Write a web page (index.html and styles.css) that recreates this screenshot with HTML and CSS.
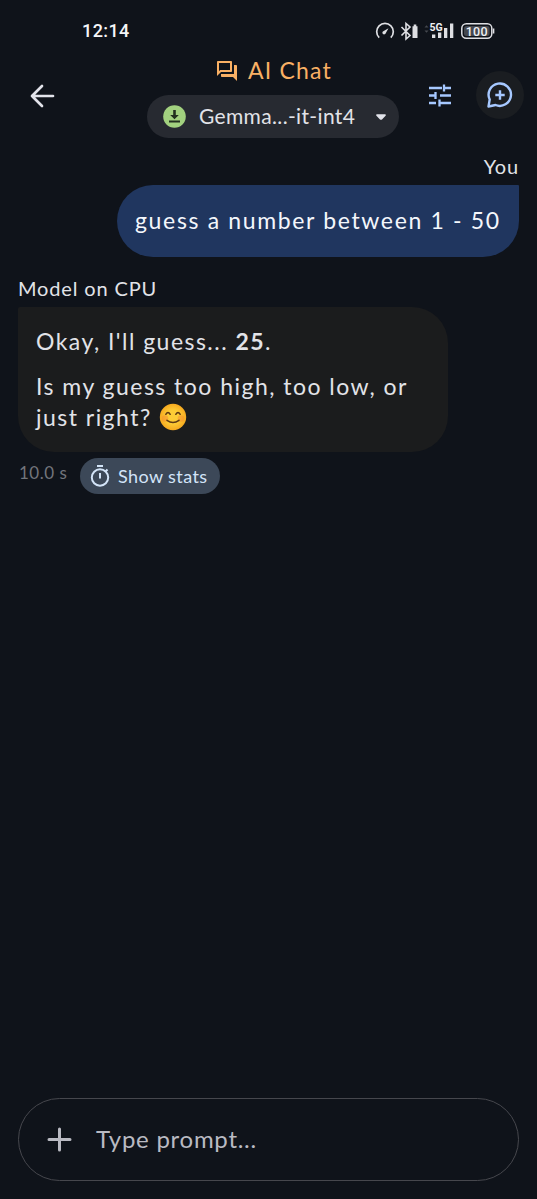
FILE: index.html
```html
<!DOCTYPE html>
<html lang="en">
<head>
<meta charset="utf-8">
<title>AI Chat</title>
<link rel="stylesheet" href="styles.css">
</head>
<body>
<div class="screen">
  <div class="status">
    <span class="clock">12:14</span>
    <svg class="status-icons" width="124" height="24" viewBox="0 0 124 24" fill="none" stroke="#dedfe3">
      <path d="M5.2 18.6A8.3 8.3 0 1 1 16.8 18.600" stroke-width="1.7"/>
      <path d="M14.500 9.200L11.700 14.200A1.700 1.700 0 1 1 9.300 12.200Z" fill="#dedfe3" stroke="none"/>
      <path d="M27.500 8L36 16.500 32 20V4.500L36 8 27.500 16.500" stroke-width="1.600"/>
      <path d="M38.500 7.300h1.200V5.500h2.600v1.800h1.200V19h-5z" fill="#dedfe3" stroke="none"/>
      <path d="M50.500 8.500l2-2.300 2 2.300zM50.500 11.500l2 2.300 2-2.300z" fill="#45484f" stroke="none"/>
      <path d="M58 15.500h3.300V19H58zM64 13.500h3.300V19H64zM70 9h3.300v10H70zM76 4.500h3.300V19H76z" fill="#dedfe3" stroke="none"/>
      <text class="net" x="55.500" y="11.500">5G</text>
      <rect x="87.800" y="4.800" width="30" height="14.400" rx="4.500" stroke-width="1.500"/>
      <rect x="90" y="7" width="25.600" height="10" rx="2.500" fill="#44474e" stroke="none"/>
      <path d="M119.600 9.500v5" stroke-width="1.500"/>
      <text class="batt" x="102.800" y="16.500" text-anchor="middle">100</text>
    </svg>
  </div>

  <header class="header">
    <svg class="back" width="26" height="26" viewBox="0 0 26 26" fill="none" stroke="#e2e3ea" stroke-width="2.700" stroke-linecap="round" stroke-linejoin="round"><path d="M24 13H3M13 3L3 13l10 10"/></svg>
    <div class="heading">
      <div class="title">
        <svg width="24" height="24" viewBox="0 0 24 24" fill="#f9b064"><path d="M15 4v7H5.170L4 12.170V4h11m1-2H3c-.55 0-1 .45-1 1v14l4-4h10c.55 0 1-.45 1-1V3c0-.55-.45-1-1-1zm5 4h-2v9H6v2c0 .55.45 1 1 1h11l4 4V7c0-.55-.45-1-1-1z"/></svg>
        <span class="title-text">AI Chat</span>
      </div>
      <div class="picker">
        <svg width="24" height="24" viewBox="0 0 24 24"><circle cx="11.500" cy="11.500" r="11.300" fill="#a2d17f"/><path d="M10.200 5h2.600v5h3L11.500 14.300l-4.300-4.300h3zM6 15.500h11v2H6z" fill="#22301f"/></svg>
        <span class="picker-text">Gemma...-it-int4</span>
        <svg class="caret" width="10" height="6" viewBox="0 0 10 6"><path d="M1 .3h8c.8 0 1.200.8.6 1.400L6 5.400c-.6.600-1.400.600-2 0L.4 1.700C-.2 1.100.2.300 1 .300z" fill="#e2e3ea"/></svg>
      </div>
    </div>
    <svg class="tune" width="28" height="28" viewBox="0 0 28 28" fill="none" stroke="#a6c8ff" stroke-width="2.300"><path d="M3 6h13M18 2.500v7M18 6h7M3 13.500h7M9.500 10v7M14 13.500h11M3 21h7M13.500 17.500v7M13.500 21H25"/></svg>
    <div class="new-chat">
      <svg width="28" height="28" viewBox="0 0 28 28" fill="none" stroke="#a6c8ff" stroke-width="2.400" stroke-linejoin="round"><path d="M2.500 25.500l1.200-7A11.200 11.200 0 1 1 9.500 24z"/><path d="M14 9.300v9.400M9.300 14h9.400"/></svg>
    </div>
  </header>

  <main class="chat">
    <div class="label you">You</div>
    <div class="bubble user"><span class="user-text">guess a number between 1 - 50</span></div>
    <div class="label model">Model on CPU</div>
    <div class="bubble reply">
      <p class="line okay">Okay, I'll guess... <b>25</b>.</p>
      <p class="line ask">Is my guess too high, too low, or</p>
      <p class="line just"><span>just right?</span>
        <svg class="smile" width="28" height="28" viewBox="0 0 28 28" fill="none" stroke-linecap="round" role="img" aria-label="😊">
          <defs><radialGradient id="face"><stop offset=".5" stop-color="#fdcc36"/><stop offset="1" stop-color="#f6a91f"/></radialGradient></defs>
          <circle cx="14" cy="14" r="13.200" fill="url(#face)"/>
          <circle cx="6" cy="15.500" r="3.300" fill="#f58a2e" opacity=".5"/><circle cx="22" cy="15.500" r="3.300" fill="#f58a2e" opacity=".5"/>
          <path d="M6.800 11.300q2.200-3.800 4.400 0M16.800 11.300q2.200-3.800 4.400 0M8 17.300q6 4.600 12 0" stroke="#5f3a13" stroke-width="1.500"/>
        </svg>
      </p>
    </div>
    <div class="meta">
      <span class="time">10.0 s</span>
      <div class="stats">
        <svg width="22" height="24" viewBox="0 0 22 24" fill="none" stroke="#d3e4f8" stroke-width="2"><circle cx="11" cy="13.500" r="8.200"/><path d="M8 2h6M11 9v5.500M16.500 7.500l2-2"/></svg>
        <span class="stats-text">Show stats</span>
      </div>
    </div>
  </main>

  <div class="composer">
    <svg width="26" height="26" viewBox="0 0 26 26" stroke="#b9bac2" stroke-width="3" stroke-linecap="round"><path d="M12.500 2v21M2 12.500h21"/></svg>
    <span class="prompt">Type prompt...</span>
  </div>
</div>
</body>
</html>
```
FILE: styles.css
```css
* { box-sizing: border-box; }
body { margin: 0; background: #0f131a; }
p { margin: 0; }
svg { display: block; flex: none; }
.screen { width: 537px; height: 1199px; display: flex; flex-direction: column; background: #0f131a; color: #e2e3e8; font-family: Lato, "Noto Sans", sans-serif; white-space: nowrap; overflow: hidden; }

.status { height: 52px; padding: 19px 39px 0 82px; display: flex; justify-content: space-between; align-items: flex-start; }
.clock { font: 500 18px/24px Roboto, sans-serif; letter-spacing: .4px; color: #f5f6f8; }
.status-icons text { fill: #eeeff2; stroke: none; font-family: Roboto, sans-serif; }
.net { font-size: 10.5px; font-weight: 700; }
.batt { font-size: 12.5px; font-weight: 500; letter-spacing: .3px; }

.header { height: 86px; padding-left: 28.500px; display: flex; }
.back { margin-top: 30.500px; }
.heading { width: 252px; margin-left: 92.500px; }
.title { height: 43px; padding: 7px 0 0 67.500px; display: flex; gap: 9.500px; color: #f9b064; font-size: 23px; line-height: 22px; }
.title-text { letter-spacing: 1.2px; }
.picker { height: 43px; padding: 0 13px 0 16px; border-radius: 22px; background: #272a31; display: flex; align-items: center; font-size: 21px; }
.picker-text { margin-left: 12px; padding-bottom: 2px; letter-spacing: .35px; }
.caret { margin-left: auto; }
.tune { margin: 30px 0 0 27px; }
.new-chat { width: 48px; height: 48px; margin: 19px 0 0 22px; border-radius: 50%; background: #1a1d21; display: grid; place-items: center; }

.chat { flex: 1; padding: 16px 18px 0; }
.label { font-size: 20px; line-height: 24px; letter-spacing: .85px; }
.you { text-align: right; }
.model { margin-top: 20px; }
.bubble { border-radius: 36px; }
.user { width: 402px; height: 72px; margin: 7px 0 0 auto; padding-left: 18px; border-top-right-radius: 1px; background: #20365f; color: #f4f7fc; font-size: 23px; line-height: 70px; letter-spacing: 1.65px; }
.model { margin-top: 19px; }
.reply { width: 430px; height: 145px; margin-top: 7px; padding: 19px 18px; border-top-left-radius: 2px; background: #1b1c1d; font-size: 23px; letter-spacing: 1.47px; }
.line { line-height: 31px; }
.ask { margin-top: 14px; }
.just { display: flex; gap: 7px; }
.smile { margin-top: 1px; }
.meta { display: flex; margin-top: 6px; }
.time { width: 61.500px; padding-left: 1px; font-size: 17px; line-height: 30px; color: #72757c; letter-spacing: .5px; }
.stats { width: 140.500px; height: 36px; padding-left: 9.500px; border-radius: 18px; background: #3c4858; color: #d3e4f8; display: flex; align-items: center; gap: 7px; font-size: 18px; }
.stats-text { letter-spacing: .4px; padding-bottom: 1px; }

.composer { height: 83px; margin: 0 18px 18px; padding-left: 28px; border: 1.500px solid #46474d; border-radius: 42px; display: flex; align-items: center; gap: 23px; }
.prompt { padding-bottom: 2px; font-size: 24px; letter-spacing: .73px; color: #b9bac2; }
```
